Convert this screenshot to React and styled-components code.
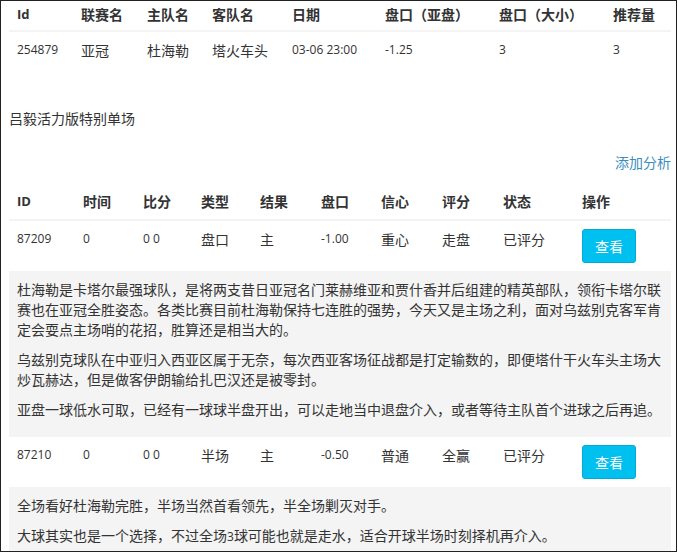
import React from "react";
import styled, { createGlobalStyle } from "styled-components";

const Global = createGlobalStyle`
  html, body { margin: 0; padding: 0; background: #fff; }
  body {
    font-family: "Noto Sans CJK SC", "Noto Sans", sans-serif;
    font-size: 14px;
    line-height: 20px;
    color: #333;
  }
`;

const Frame = styled.div`
  width: 677px;
  height: 552px;
  box-sizing: border-box;
  border: 1px solid #222;
  padding: 0 5px 0 8px;
  overflow: hidden;
  background: #fff;
`;

const Table = styled.table`
  width: 662px;
  table-layout: fixed;
  border-collapse: collapse;
  border-spacing: 0;
`;

const Th = styled.th`
  text-align: left;
  font-weight: bold;
  font-size: ${(p) => (p.$latin ? "13px" : "14px")};
  font-family: ${(p) =>
    p.$latin ? '"Open Sans", sans-serif' : '"Noto Sans CJK SC", sans-serif'};
  padding: ${(p) => (p.$compact ? "3px 8px 6px" : "8px")};
  line-height: 20px;
  border-bottom: 2px solid #f4f4f4;
  vertical-align: bottom;
  white-space: nowrap;
`;

const Td = styled.td`
  padding: 8px;
  vertical-align: top;
  line-height: 20px;
  white-space: nowrap;
  font-size: ${(p) => (p.$latin ? "12px" : "14px")};
  font-family: ${(p) =>
    p.$latin ? '"Open Sans", sans-serif' : '"Noto Sans CJK SC", sans-serif'};
`;

const NoteCell = styled.td`
  background: #f4f4f4;
  padding: 8px;
  vertical-align: top;
`;

const Para = styled.p`
  margin: 0 0 10px;
  line-height: 20px;
  font-size: 14px;
`;

const Latin = styled.span`
  font-family: "Open Sans", sans-serif;
  font-size: 12px;
`;

const Title = styled.div`
  margin-top: 40px;
  line-height: 20px;
  font-size: 14px;
`;

const AddRow = styled.div`
  margin-top: 24px;
  width: 662px;
  text-align: right;
  line-height: 20px;
`;

const AddLink = styled.a`
  color: #3c8dbc;
  text-decoration: none;
  font-size: 14px;
`;

const Table2 = styled(Table)`
  margin-top: 11px;
`;

const ViewButton = styled.button`
  display: inline-block;
  background: #00c0ef;
  border: 1px solid #00acd6;
  border-radius: 3px;
  color: #fff;
  font-family: "Noto Sans CJK SC", sans-serif;
  font-size: 14px;
  line-height: 20px;
  padding: 6px 12px;
  margin: 0;
  cursor: pointer;
`;

const cols1 = [64, 66, 65, 80, 93, 114, 114, 66];
const head1 = ["Id", "联赛名", "主队名", "客队名", "日期", "盘口（亚盘）", "盘口（大小）", "推荐量"];
const row1 = [
  ["254879", true],
  ["亚冠", false],
  ["杜海勒", false],
  ["塔火车头", false],
  ["03-06 23:00", true],
  ["-1.25", true],
  ["3", true],
  ["3", true],
];

const cols2 = [66, 60, 58, 59, 61, 60, 61, 61, 79, 97];
const head2 = ["ID", "时间", "比分", "类型", "结果", "盘口", "信心", "评分", "状态", "操作"];

const matches = [
  {
    id: "87209",
    time: "0",
    score: "0 0",
    type: "盘口",
    result: "主",
    line: "-1.00",
    conf: "重心",
    rating: "走盘",
    status: "已评分",
    notes: [
      "杜海勒是卡塔尔最强球队，是将两支昔日亚冠名门莱赫维亚和贾什香并后组建的精英部队，领衔卡塔尔联赛也在亚冠全胜姿态。各类比赛目前杜海勒保持七连胜的强势，今天又是主场之利，面对乌兹别克客军肯定会耍点主场哨的花招，胜算还是相当大的。",
      "乌兹别克球队在中亚归入西亚区属于无奈，每次西亚客场征战都是打定输数的，即便塔什干火车头主场大炒瓦赫达，但是做客伊朗输给扎巴汉还是被零封。",
      "亚盘一球低水可取，已经有一球球半盘开出，可以走地当中退盘介入，或者等待主队首个进球之后再追。",
    ],
  },
  {
    id: "87210",
    time: "0",
    score: "0 0",
    type: "半场",
    result: "主",
    line: "-0.50",
    conf: "普通",
    rating: "全赢",
    status: "已评分",
    notes: [
      "全场看好杜海勒完胜，半场当然首看领先，半全场剿灭对手。",
      <>
        大球其实也是一个选择，不过全场<Latin>3</Latin>球可能也就是走水，适合开球半场时刻择机再介入。
      </>,
    ],
  },
];

export default function App() {
  return (
    <>
      <Global />
      <Frame>
        <Table>
          <colgroup>
            {cols1.map((w, i) => (
              <col key={i} style={{ width: w }} />
            ))}
          </colgroup>
          <thead>
            <tr>
              {head1.map((h, i) => (
                <Th key={h} $compact $latin={i === 0}>
                  {h}
                </Th>
              ))}
            </tr>
          </thead>
          <tbody>
            <tr>
              {row1.map(([v, latin], i) => (
                <Td key={i} $latin={latin}>
                  {v}
                </Td>
              ))}
            </tr>
          </tbody>
        </Table>

        <Title>吕毅活力版特别单场</Title>
        <AddRow>
          <AddLink href="#">添加分析</AddLink>
        </AddRow>

        <Table2>
          <colgroup>
            {cols2.map((w, i) => (
              <col key={i} style={{ width: w }} />
            ))}
          </colgroup>
          <thead>
            <tr>
              {head2.map((h, i) => (
                <Th key={h} $latin={i === 0}>
                  {h}
                </Th>
              ))}
            </tr>
          </thead>
          <tbody>
            {matches.map((m) => (
              <React.Fragment key={m.id}>
                <tr>
                  <Td $latin>{m.id}</Td>
                  <Td $latin>{m.time}</Td>
                  <Td $latin>{m.score}</Td>
                  <Td>{m.type}</Td>
                  <Td>{m.result}</Td>
                  <Td $latin>{m.line}</Td>
                  <Td>{m.conf}</Td>
                  <Td>{m.rating}</Td>
                  <Td>{m.status}</Td>
                  <Td>
                    <ViewButton>查看</ViewButton>
                  </Td>
                </tr>
                <tr>
                  <NoteCell colSpan={10}>
                    {m.notes.map((n, i) => (
                      <Para key={i}>{n}</Para>
                    ))}
                  </NoteCell>
                </tr>
              </React.Fragment>
            ))}
          </tbody>
        </Table2>
      </Frame>
    </>
  );
}
